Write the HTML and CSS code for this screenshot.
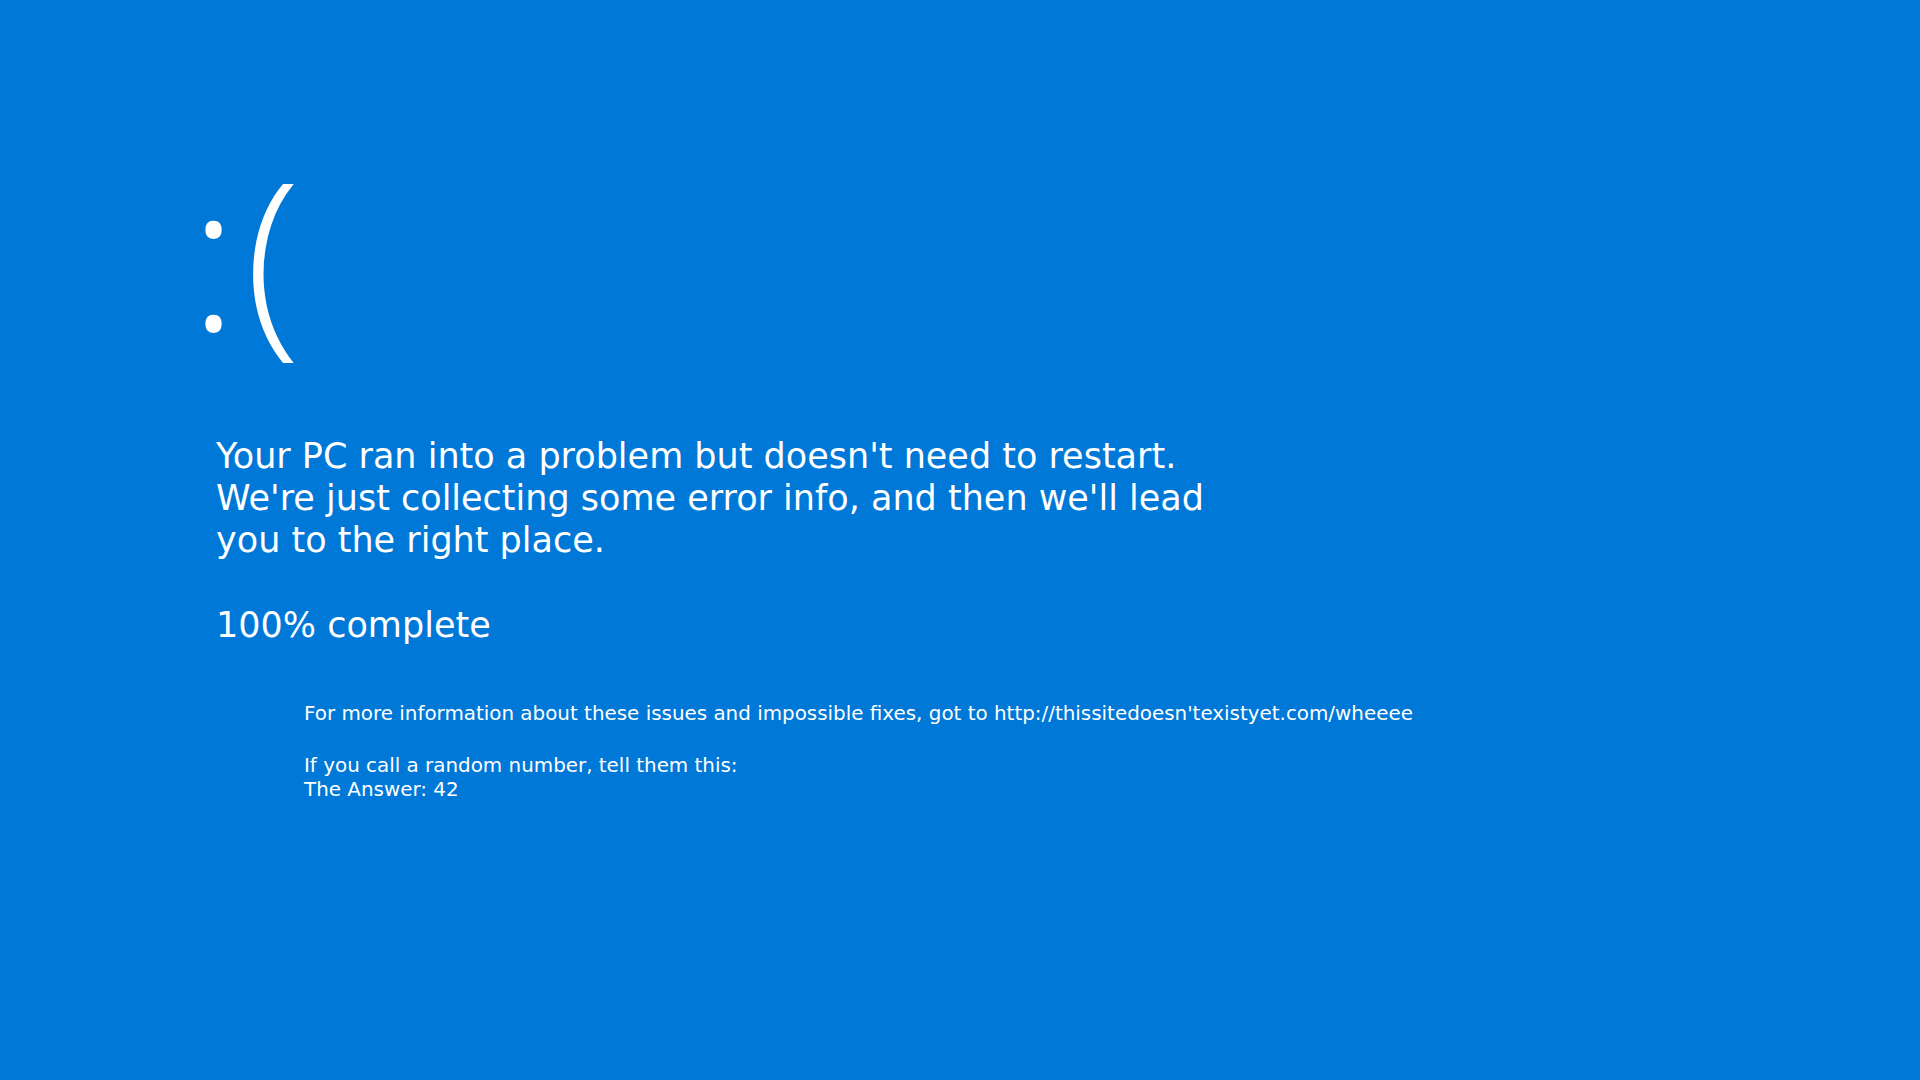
FILE: index.html
```html
<!DOCTYPE html>
<html lang="en">
<head>
<meta charset="utf-8">
<title>Blue screen</title>
<link rel="stylesheet" href="styles.css">
</head>
<body>
<main class="screen">
  <div class="face">:(</div>
  <p class="message">Your PC ran into a problem but doesn't need to restart. We're just collecting some error info, and then we'll lead you to the right place.</p>
  <p class="progress">100% complete</p>
  <div class="details">
    <p class="info">For more information about these issues and impossible fixes, got to http://thissitedoesn'texistyet.com/wheeee</p>
    <p class="support">If you call a random number, tell them this:<br>The Answer: 42</p>
  </div>
</main>
</body>
</html>
```

FILE: styles.css
```css
html, body {
  margin: 0;
  height: 100%;
}
body {
  background: #0078d7;
  color: #ffffff;
  font-family: "DejaVu Sans", sans-serif;
  overflow: hidden;
}
.screen {
  padding: 132px 0 0 216px;
}
.face {
  font-family: "Open Sans", sans-serif;
  font-weight: 300;
  font-size: 205px;
  line-height: 240px;
  height: 240px;
  margin-left: -27px;
  letter-spacing: 7px;
}
.message {
  margin: 63px 0 0 0;
  width: 1010px;
  font-size: 35px;
  line-height: 42px;
}
.progress {
  margin: 43px 0 0 0;
  font-size: 35px;
  line-height: 42px;
}
.details {
  margin: 56px 0 0 88px;
}
.info {
  margin: 0;
  font-size: 19.9px;
  line-height: 24px;
}
.support {
  margin: 28px 0 0 0;
  font-size: 19.9px;
  line-height: 24px;
}
```
